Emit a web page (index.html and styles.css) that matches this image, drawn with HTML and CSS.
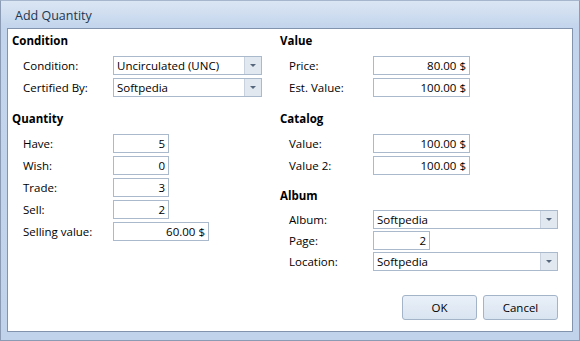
FILE: index.html
```html
<!DOCTYPE html>
<html lang="en">
<head>
    <meta charset="UTF-8">
    <title>Add Quantity</title>
    <link rel="stylesheet" href="styles.css">
</head>
<body>
    <div class="window">
        <div class="title">Add Quantity</div>
        <div class="client">
            <div class="columns">
                <div class="column left">
                    <div class="section">
                        <h2>Condition</h2>
                        <div class="rows">
                            <label>Condition:</label>
                            <div class="combo w149"><span>Uncirculated (UNC)</span><i class="drop"></i></div>
                            <label>Certified By:</label>
                            <div class="combo w149"><span>Softpedia</span><i class="drop"></i></div>
                        </div>
                    </div>
                    <div class="section">
                        <h2>Quantity</h2>
                        <div class="rows">
                            <label>Have:</label>
                            <div class="field w56">5</div>
                            <label>Wish:</label>
                            <div class="field w56">0</div>
                            <label>Trade:</label>
                            <div class="field w56">3</div>
                            <label>Sell:</label>
                            <div class="field w56">2</div>
                            <label>Selling value:</label>
                            <div class="field w96">60.00 $</div>
                        </div>
                    </div>
                </div>
                <div class="column right">
                    <div class="section">
                        <h2>Value</h2>
                        <div class="rows">
                            <label>Price:</label>
                            <div class="field w97">80.00 $</div>
                            <label>Est. Value:</label>
                            <div class="field w97">100.00 $</div>
                        </div>
                    </div>
                    <div class="section">
                        <h2>Catalog</h2>
                        <div class="rows">
                            <label>Value:</label>
                            <div class="field w97">100.00 $</div>
                            <label>Value 2:</label>
                            <div class="field w97">100.00 $</div>
                        </div>
                    </div>
                    <div class="section album">
                        <h2>Album</h2>
                        <div class="rows">
                            <label>Album:</label>
                            <div class="combo w185"><span>Softpedia</span><i class="drop"></i></div>
                            <label>Page:</label>
                            <div class="field w57">2</div>
                            <label>Location:</label>
                            <div class="combo w185"><span>Softpedia</span><i class="drop"></i></div>
                        </div>
                    </div>
                </div>
            </div>
            <div class="buttons">
                <button>OK</button>
                <button>Cancel</button>
            </div>
        </div>
    </div>
</body>
</html>
```

FILE: styles.css
```css
* {
    box-sizing: border-box;
}

body {
    margin: 0;
    width: 580px;
    height: 341px;
    font-family: "Open Sans", "Noto Sans", sans-serif;
    font-size: 11.5px;
    color: #000;
}

.window {
    width: 580px;
    height: 341px;
    border: 1px solid #8a9bb3;
    border-top-color: #a6b6cc;
    background: linear-gradient(#dbe6f4, #c3d5ec 26px, #c1d3ea);
    padding: 0 6px 8px 6px;
    display: flex;
    flex-direction: column;
}

.title {
    height: 27px;
    padding: 5px 0 0 8px;
    font-size: 12.5px;
    color: #22364f;
    line-height: 20px;
}

.client {
    flex: 1;
    background: #fff;
    border: 1px solid #8193ad;
    display: flex;
    flex-direction: column;
    padding: 4px 14px 11px 4px;
}

.columns {
    display: flex;
    flex: 1;
}

.column.left {
    width: 268px;
}

.column.right {
    flex: 1;
}

.section {
    margin-bottom: 14px;
}

.section.album {
    margin-top: -1px;
}

h2 {
    margin: 0 0 7px 0;
    font-size: 11.5px;
    font-weight: bold;
    line-height: 16px;
}

.album h2 {
    margin-bottom: 6px;
}

.rows {
    display: grid;
    grid-template-columns: 90px auto;
    row-gap: 3px;
    padding-left: 11px;
    justify-items: start;
}

.right .rows {
    grid-template-columns: 84px auto;
    padding-left: 9px;
}

.album .rows {
    row-gap: 2px;
}

label {
    line-height: 19px;
    height: 19px;
    white-space: nowrap;
}

.field,
.combo {
    height: 19px;
    border: 1px solid #abb9cd;
    line-height: 17px;
    white-space: nowrap;
}

.field {
    text-align: right;
    padding-right: 3px;
}

.combo {
    display: flex;
}

.combo span {
    flex: 1;
    padding-left: 3px;
}

.drop {
    width: 17px;
    border-left: 1px solid #c8d2de;
    background: #e2e8f0;
    display: flex;
    align-items: center;
    justify-content: center;
}

.drop::after {
    content: "";
    border-left: 3px solid transparent;
    border-right: 3px solid transparent;
    border-top: 3px solid #56677d;
}

.w56 { width: 56px; }
.w57 { width: 57px; }
.w96 { width: 96px; }
.w97 { width: 97px; }
.w149 { width: 149px; }
.w185 { width: 185px; }

.buttons {
    display: flex;
    justify-content: flex-end;
    gap: 6px;
}

button {
    width: 75px;
    height: 25px;
    font-family: inherit;
    font-size: 11.5px;
    color: #000;
    border: 1px solid #a3b3c8;
    border-radius: 3px;
    background: linear-gradient(#e9f0f8, #d9e4f1);
}
```
